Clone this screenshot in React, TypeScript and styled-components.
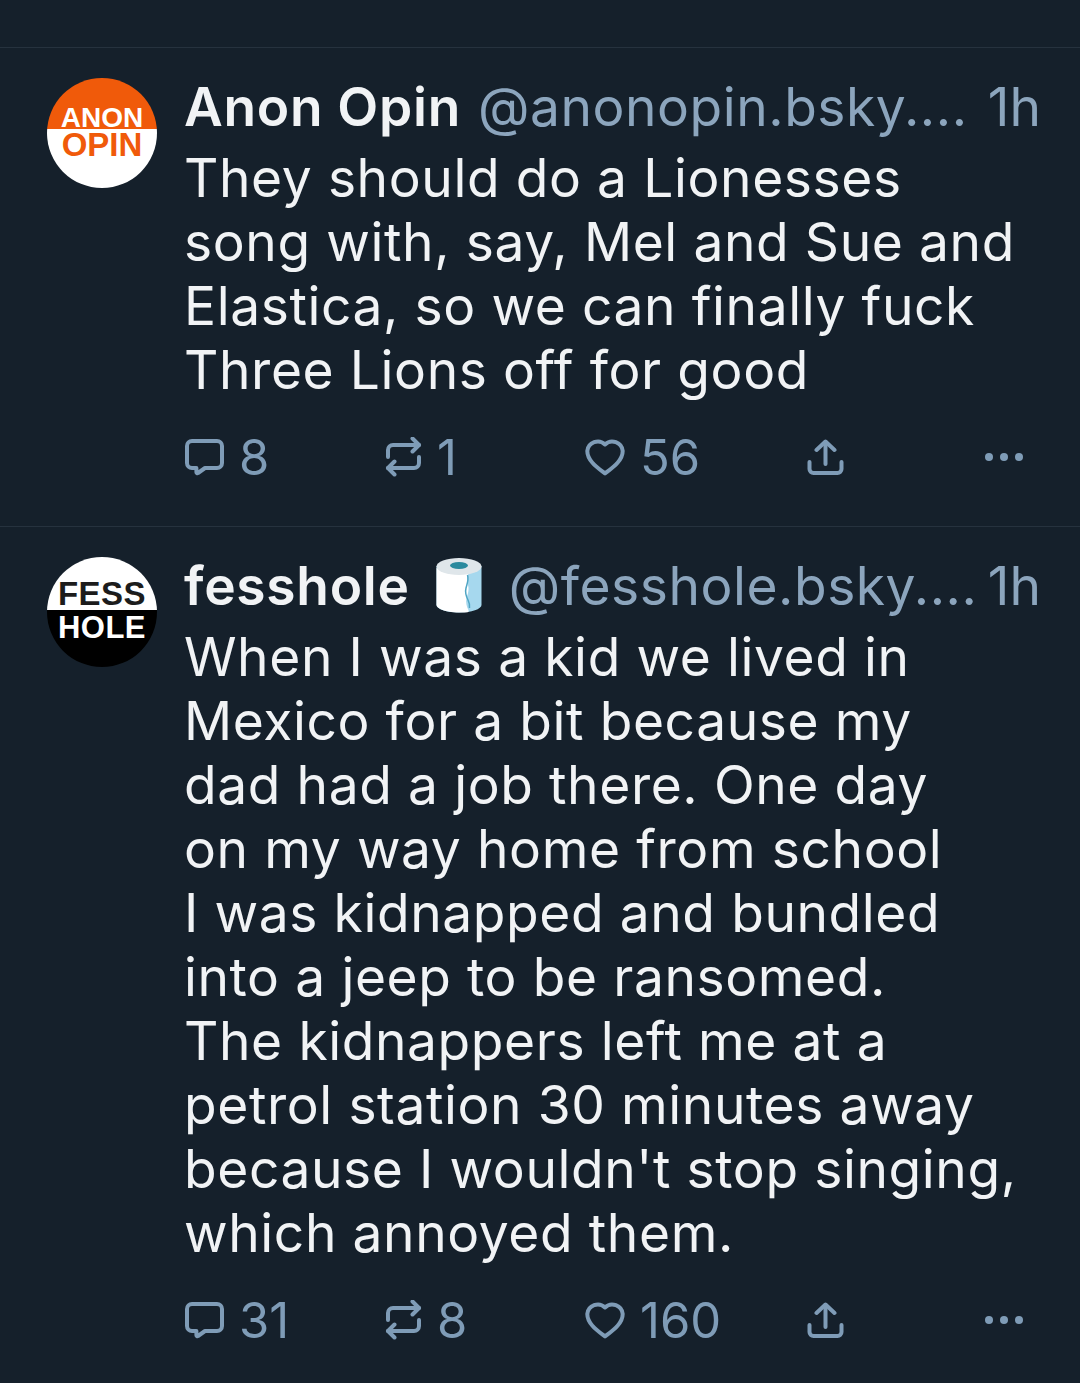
import React from 'react';
import styled, { createGlobalStyle } from 'styled-components';

const GlobalStyle = createGlobalStyle`
  html, body {
    margin: 0;
    padding: 0;
    background: #15202b;
  }
  * {
    box-sizing: border-box;
  }
`;

interface PostData {
  id: string,
  avatar: 'anon' | 'fess',
  name: string,
  emoji?: boolean,
  handle: string,
  time: string,
  lines: string[],
  replies: number,
  reposts: number,
  likes: number,
}

const posts: PostData[] = [
  {
    id: 'anon',
    avatar: 'anon',
    name: 'Anon Opin',
    handle: '@anonopin.bsky....',
    time: '1h',
    lines: [
      'They should do a Lionesses',
      'song with, say, Mel and Sue and',
      'Elastica, so we can finally fuck',
      'Three Lions off for good',
    ],
    replies: 8,
    reposts: 1,
    likes: 56,
  },
  {
    id: 'fess',
    avatar: 'fess',
    name: 'fesshole',
    emoji: true,
    handle: '@fesshole.bsky....',
    time: '1h',
    lines: [
      'When I was a kid we lived in',
      'Mexico for a bit because my',
      'dad had a job there. One day',
      'on my way home from school',
      'I was kidnapped and bundled',
      'into a jeep to be ransomed.',
      'The kidnappers left me at a',
      'petrol station 30 minutes away',
      "because I wouldn't stop singing,",
      'which annoyed them.',
    ],
    replies: 31,
    reposts: 8,
    likes: 160,
  },
];

const CommentIcon = () => (
  <ActionSvg width="39" height="38" viewBox="0 0 39 38">
    <path d="M7 3h25a5 5 0 0 1 5 5v17a5 5 0 0 1-5 5H20l-7 5a1 1 0 0 1-1.600-.800V30H7a5 5 0 0 1-5-5V8a5 5 0 0 1 5-5z" />
  </ActionSvg>
);

const RepostIcon = () => (
  <ActionSvg width="37" height="40" viewBox="0 0 37 40">
    <path d="M3 20v-7a5 5 0 0 1 5-5h26" />
    <path d="M27.500 1.500l6.500 6.500-6.500 6.500" />
    <path d="M34 20v6a5 5 0 0 1-5 5H3" />
    <path d="M9.500 24.500L3 31l6.500 6.500" />
  </ActionSvg>
);

const HeartIcon = () => (
  <ActionSvg width="40" height="38" viewBox="0 0 40 38">
    <path d="M20 35.500C13 30 2.300 23 2.300 13A10.500 10.500 0 0 1 20 6.500 10.500 10.500 0 0 1 37.700 13C37.700 23 27 30 20 35.500z" />
  </ActionSvg>
);

const ShareIcon = () => (
  <ActionSvg width="37" height="36" viewBox="0 0 37 36">
    <path d="M18.500 3v22" />
    <path d="M9.500 11l9-8.500 9 8.500" />
    <path d="M2.500 23v7a4 4 0 0 0 4 4h24a4 4 0 0 0 4-4v-7" />
  </ActionSvg>
);

const MoreIcon = () => (
  <svg width="40" height="10" viewBox="0 0 40 10" fill="#7f9cb7">
    <circle cx="5" cy="5" r="4" />
    <circle cx="20" cy="5" r="4" />
    <circle cx="35" cy="5" r="4" />
  </svg>
);

const ToiletRoll = () => (
  <RollSvg width="46" height="55" viewBox="0 0 46 55">
    <path d="M0.500 8v39c0 4 10 7.500 22.500 7.500s22.500-3.500 22.500-7.500V8z" fill="#a6d8ee" />
    <path d="M0.500 10v37c0 3 7 6 15 7 5 .5 11 .8 16 .2 1-.2 1.500-1 1-2-2-4-3-8-2-12 1-4 3-8 1.500-13-1-4-.5-8 .5-12z" fill="#ffffff" />
    <path d="M31.500 17c1.500 5-.5 9-1.500 13-1 4 0 8 2 12 1 2 2 5 1.500 8" fill="none" stroke="#4fa5c4" strokeWidth="1.500" />
    <ellipse cx="23" cy="8.500" rx="22.500" ry="8.500" fill="#dfe6ea" />
    <ellipse cx="23" cy="7.500" rx="9" ry="3.500" fill="#2a8a9e" />
  </RollSvg>
);

export default function App(): JSX.Element {
  return (
    <Page>
      <GlobalStyle />
      <TopBar />
      {posts.map((post) => (
        <Post key={post.id}>
          {post.avatar === 'anon' ? (
            <Avatar>
              <AvatarHalf $bg="#f05a0a" $color="#ffffff" $align="flex-end" $height={51}>
                <AvatarWord $size={28}>ANON</AvatarWord>
              </AvatarHalf>
              <AvatarHalf $bg="#ffffff" $color="#f05a0a" $align="flex-start" $height={59} $pad={3}>
                <AvatarWord $size={33}>OPIN</AvatarWord>
              </AvatarHalf>
            </Avatar>
          ) : (
            <Avatar>
              <AvatarHalf $bg="#ffffff" $color="#1c1c1c" $align="flex-end" $height={53} $pad={3}>
                <AvatarWord $size={33} $spacing={0.5}>FESS</AvatarWord>
              </AvatarHalf>
              <AvatarHalf $bg="#000000" $color="#ffffff" $align="flex-start" $height={57} $pad={6}>
                <AvatarWord $size={31} $spacing={0.5}>HOLE</AvatarWord>
              </AvatarHalf>
            </Avatar>
          )}
          <Content>
            <Header>
              <Author>
                <Name>{post.name}</Name>
                {post.emoji && <ToiletRoll />}
                <Handle>{post.handle}</Handle>
              </Author>
              <Time>{post.time}</Time>
            </Header>
            <Body>
              {post.lines.map((line) => (
                <div key={line}>{line}</div>
              ))}
            </Body>
            <Actions>
              <Action $width={200}><CommentIcon /><Count>{post.replies}</Count></Action>
              <Action $width={200}><RepostIcon /><Count>{post.reposts}</Count></Action>
              <Action $width={222}><HeartIcon /><Count>{post.likes}</Count></Action>
              <Action $width={177}><ShareIcon /></Action>
              <MoreIcon />
            </Actions>
          </Content>
        </Post>
      ))}
    </Page>
  );
}

const Page = styled.div`
  width: 1080px;
  height: 1383px;
  overflow: hidden;
  background: #15202b;
  font-family: Inter, "Liberation Sans", sans-serif;
`;

const TopBar = styled.div`
  height: 47px;
`;

const Post = styled.div`
  display: flex;
  gap: 28px;
  padding: 26px 39px 0 47px;
  height: 479px;
  border-top: 1px solid #26323e;
  &:last-child {
    height: 857px;
  }
`;

const Avatar = styled.div`
  flex: none;
  width: 110px;
  height: 110px;
  margin-top: 4px;
  border-radius: 50%;
  overflow: hidden;
  display: flex;
  flex-direction: column;
`;

const AvatarHalf = styled.div<{ $bg: string, $color: string, $align: string, $height: number, $pad?: number }>`
  height: ${(p) => p.$height}px;
  padding: ${(p) => p.$pad || 0}px 0;
  display: flex;
  justify-content: center;
  align-items: ${(p) => p.$align};
  background: ${(p) => p.$bg};
  color: ${(p) => p.$color};
`;

const AvatarWord = styled.span<{ $size: number, $spacing?: number }>`
  font-family: "Liberation Sans", Arial, sans-serif;
  font-weight: 700;
  font-size: ${(p) => p.$size}px;
  letter-spacing: ${(p) => p.$spacing || 0}px;
  line-height: ${(p) => p.$size * 0.8}px;
`;

const Content = styled.div`
  flex: 1;
  min-width: 0;
  margin-left: -1px;
`;

const Header = styled.div`
  display: flex;
  justify-content: space-between;
  align-items: center;
  height: 64px;
  white-space: nowrap;
`;

const Author = styled.div`
  display: flex;
  align-items: center;
`;

const Name = styled.span`
  font-size: 53.300px;
  font-weight: 600;
  letter-spacing: 0.700px;
  color: #f1f3f5;
  margin-right: 17px;
`;

const Handle = styled.span`
  font-size: 53.300px;
  font-weight: 400;
  letter-spacing: 0.550px;
  color: #8ca5bd;
`;

const Time = styled(Handle)`
  letter-spacing: 0;
`;

const RollSvg = styled.svg`
  flex: none;
  margin: 0 27px 0 9px;
`;

const Body = styled.div`
  margin-top: 8px;
  font-size: 53.300px;
  line-height: 64px;
  letter-spacing: 0.600px;
  color: #f1f3f5;
  white-space: nowrap;
`;

const Actions = styled.div`
  display: flex;
  align-items: center;
  height: 50px;
  margin-top: 30px;
  padding-left: 1px;
`;

const Action = styled.div<{ $width: number }>`
  display: flex;
  align-items: center;
  gap: 15px;
  width: ${(p) => p.$width}px;
  flex: none;
`;

const ActionSvg = styled.svg`
  flex: none;
  fill: none;
  stroke: #7f9cb7;
  stroke-width: 4;
  stroke-linecap: round;
  stroke-linejoin: round;
`;

const Count = styled.span`
  font-size: 49px;
  color: #7f9cb7;
`;
